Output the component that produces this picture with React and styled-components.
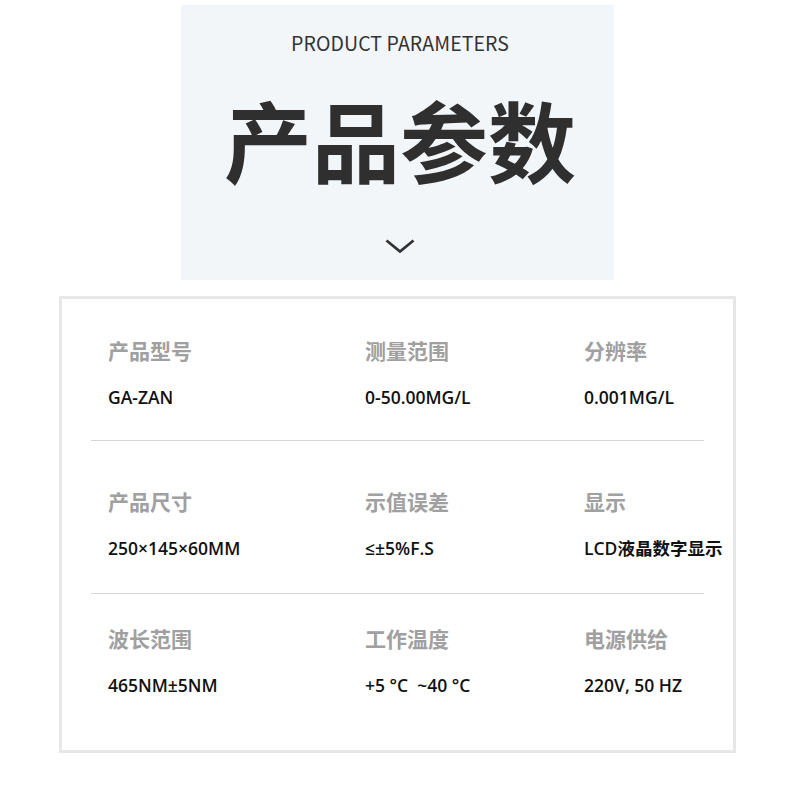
import React from "react";
import styled, { createGlobalStyle } from "styled-components";

const Global = createGlobalStyle`
  html, body { margin: 0; padding: 0; background: #ffffff; }
  body { font-family: "Noto Sans", "Noto Sans CJK SC", sans-serif; }
`;

const Page = styled.div`
  width: 795px;
  display: flex;
  flex-direction: column;
  align-items: center;
  padding-top: 5px;
`;

const Header = styled.header`
  width: 433px;
  height: 275px;
  box-sizing: border-box;
  background: #f3f6f9;
  display: flex;
  flex-direction: column;
  align-items: center;
  padding: 26px 0 0 5px;
`;

const Sub = styled.div`
  font-family: "Noto Sans CJK SC", "Noto Sans", sans-serif;
  font-size: 19.5px;
  line-height: 24px;
  font-weight: 400;
  letter-spacing: 0.1px;
  color: #333333;
`;

const Title = styled.h1`
  margin: 33px 0 0;
  font-family: "Noto Sans CJK SC", sans-serif;
  font-size: 88px;
  line-height: 100px;
  font-weight: 700;
  color: #2f2f2f;
  letter-spacing: 0;
`;

const Chevron = styled.svg`
  margin-top: 51px;
  display: block;
`;

const Card = styled.section`
  margin-top: 16px;
  width: 677px;
  height: 457px;
  box-sizing: border-box;
  border: 3px solid #e7e7e7;
  display: flex;
  flex-direction: column;
`;

const Row = styled.div`
  display: grid;
  grid-template-columns: 257px 219px 1fr;
  padding: ${(p) => p.$top}px 0 ${(p) => p.$bottom}px 46px;
`;

const Cell = styled.div`
  display: flex;
  flex-direction: column;
  gap: 20px;
`;

const Label = styled.div`
  font-family: "Noto Sans CJK SC", sans-serif;
  font-size: 21px;
  line-height: 30px;
  font-weight: 700;
  color: #a0a0a0;
`;

const Value = styled.div`
  font-family: "Open Sans", "Liberation Sans", "Noto Sans CJK SC", sans-serif;
  font-size: 17.5px;
  line-height: 24px;
  font-weight: 600;
  color: #111111;
  white-space: pre;
`;

const Divider = styled.hr`
  margin: 0 29px;
  border: 0;
  height: 1px;
  background: #d6d6d6;
`;

const rows = [
  {
    top: 36,
    bottom: 31,
    items: [
      ["产品型号", "GA-ZAN"],
      ["测量范围", "0-50.00MG/L"],
      ["分辨率", "0.001MG/L"],
    ],
  },
  {
    top: 45,
    bottom: 33,
    items: [
      ["产品尺寸", "250×145×60MM"],
      ["示值误差", "≤±5%F.S"],
      ["显示", "LCD液晶数字显示"],
    ],
  },
  {
    top: 29,
    bottom: 53,
    items: [
      ["波长范围", "465NM±5NM"],
      ["工作温度", "+5 °C  ~40 °C"],
      ["电源供给", "220V, 50 HZ"],
    ],
  },
];

export default function App() {
  return (
    <>
      <Global />
      <Page>
        <Header>
          <Sub>PRODUCT PARAMETERS</Sub>
          <Title>产品参数</Title>
          <Chevron width="30" height="14" viewBox="0 0 30 14">
            <polyline
              points="1.5,1.5 15,12.5 28.5,1.5"
              fill="none"
              stroke="#333333"
              strokeWidth="2.8"
            />
          </Chevron>
        </Header>
        <Card>
          {rows.map((r, i) => (
            <React.Fragment key={i}>
              <Row $top={r.top} $bottom={r.bottom}>
                {r.items.map(([l, v]) => (
                  <Cell key={l}>
                    <Label>{l}</Label>
                    <Value>{v}</Value>
                  </Cell>
                ))}
              </Row>
              {i < rows.length - 1 && <Divider />}
            </React.Fragment>
          ))}
        </Card>
      </Page>
    </>
  );
}
